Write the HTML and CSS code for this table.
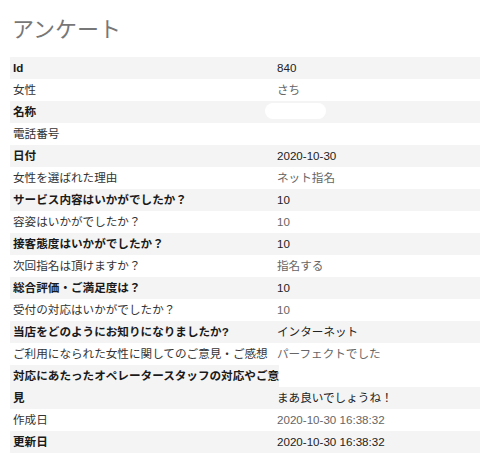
FILE: index.html
```html
<!DOCTYPE html>
<html lang="ja">
<head>
<meta charset="utf-8">
<title>アンケート</title>
<link rel="stylesheet" href="styles.css">
</head>
<body>
<main class="page">
  <h1 class="title">アンケート</h1>
  <div class="sheet">
    <div class="row odd"><div class="label">Id</div><div class="value">840</div></div>
    <div class="row"><div class="label">女性</div><div class="value">さち</div></div>
    <div class="row odd"><div class="label">名称</div><div class="value"><span class="redact"></span></div></div>
    <div class="row"><div class="label">電話番号</div><div class="value"></div></div>
    <div class="row odd"><div class="label">日付</div><div class="value">2020-10-30</div></div>
    <div class="row"><div class="label">女性を選ばれた理由</div><div class="value">ネット指名</div></div>
    <div class="row odd"><div class="label">サービス内容はいかがでしたか？</div><div class="value">10</div></div>
    <div class="row"><div class="label">容姿はいかがでしたか？</div><div class="value">10</div></div>
    <div class="row odd"><div class="label">接客態度はいかがでしたか？</div><div class="value">10</div></div>
    <div class="row"><div class="label">次回指名は頂けますか？</div><div class="value">指名する</div></div>
    <div class="row odd"><div class="label">総合評価・ご満足度は？</div><div class="value">10</div></div>
    <div class="row"><div class="label">受付の対応はいかがでしたか？</div><div class="value">10</div></div>
    <div class="row odd"><div class="label">当店をどのようにお知りになりましたか?</div><div class="value">インターネット</div></div>
    <div class="row"><div class="label">ご利用になられた女性に関してのご意見・ご感想</div><div class="value">パーフェクトでした</div></div>
    <div class="split">
      <div class="overflow-line"><span class="overflow-label">対応にあたったオペレータースタッフの対応やご意</span></div>
      <div class="row odd"><div class="label">見</div><div class="value">まあ良いでしょうね！</div></div>
    </div>
    <div class="row"><div class="label">作成日</div><div class="value">2020-10-30 16:38:32</div></div>
    <div class="row odd"><div class="label">更新日</div><div class="value">2020-10-30 16:38:32</div></div>
  </div>
</main>
</body>
</html>
```

FILE: styles.css
```css
html, body {
  margin: 0;
  padding: 0;
  background: #fff;
}

body {
  font-family: "Liberation Sans", "Noto Sans CJK JP", sans-serif;
  font-size: 11.6px;
  color: #333;
}

.page {
  padding-left: 10px;
}

.title {
  margin: 14px 0 17px 2px;
  font-size: 22px;
  line-height: 26px;
  font-weight: normal;
  color: #777;
  font-family: "Noto Sans CJK JP", sans-serif;
}

.sheet {
  display: flex;
  flex-direction: column;
}

.row {
  display: grid;
  grid-template-columns: 264px 1fr;
  height: 22px;
  line-height: 22px;
  background: #fff;
}

.row.odd {
  background: #f4f4f4;
}

.label {
  padding-left: 3px;
  color: #333;
  white-space: nowrap;
}

.value {
  padding-left: 3px;
  color: #666;
  white-space: nowrap;
}

.row.odd .label {
  font-weight: bold;
  color: #1a1a1a;
}

.row.odd .value {
  color: #222;
}

.redact {
  display: inline-block;
  width: 61px;
  height: 16px;
  margin-left: -12px;
  margin-top: 2px;
  vertical-align: top;
  border-radius: 8px;
  background: #fff;
}

.split {
  display: flex;
  flex-direction: column;
}

.overflow-line {
  height: 22px;
  line-height: 22px;
  background: #fff;
}

.overflow-label {
  display: inline-block;
  height: 22px;
  padding: 0 0 0 3px;
  background: #f4f4f4;
  font-weight: bold;
  color: #1a1a1a;
  white-space: nowrap;
}
```
